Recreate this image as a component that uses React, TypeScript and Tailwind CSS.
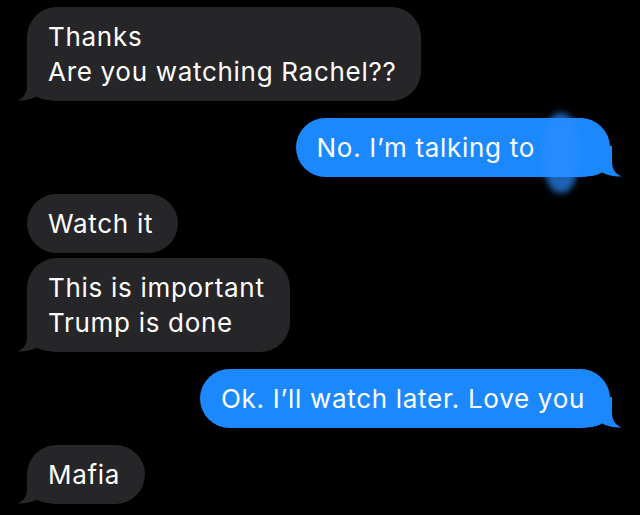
import React from 'react'

type Msg = {
  from: 'me' | 'them'
  lines: string[]
  tail: boolean
  gap: 'big' | 'small'
  redacted?: boolean
}

const messages: Msg[] = [
  { from: 'them', lines: ['Thanks', 'Are you watching Rachel??'], tail: true, gap: 'big' },
  { from: 'me', lines: ['No. I’m talking to'], tail: true, gap: 'big', redacted: true },
  { from: 'them', lines: ['Watch it'], tail: false, gap: 'big' },
  { from: 'them', lines: ['This is important', 'Trump is done'], tail: true, gap: 'small' },
  { from: 'me', lines: ['Ok. I’ll watch later. Love you'], tail: true, gap: 'big' },
  { from: 'them', lines: ['Mafia'], tail: true, gap: 'big' },
]

function Tail({ side, color }: { side: 'left' | 'right'; color: string }) {
  return (
    <svg
      viewBox="0 0 40 31"
      width="40"
      height="31"
      className={
        side === 'left'
          ? 'absolute -left-[10px] bottom-0'
          : 'absolute -right-[12px] bottom-0 -scale-x-100'
      }
    >
      <path
        d="M10 0 L10 15 C10 23 7 27.5 0.5 30.5 C7 31 14 29.5 20 26.5 C25 29.5 31 30.5 40 30.5 L40 0 Z"
        fill={color}
      />
    </svg>
  )
}

function Bubble({ msg }: { msg: Msg }) {
  const mine = msg.from === 'me'
  const color = mine ? '#1b89fd' : '#262628'
  return (
    <div
      className={`flex ${mine ? 'justify-end' : 'justify-start'} ${
        msg.gap === 'big' ? 'mt-[17px]' : 'mt-[5px]'
      } first:mt-0`}
    >
      <div
        className={`relative rounded-[30px] pl-[21px] pr-[25px] py-[12px] text-[26px] leading-[35px] tracking-[0.7px] text-white ${
          mine ? 'bg-[#1b89fd]' : 'bg-[#262628]'
        }`}
      >
        {msg.tail && <Tail side={mine ? 'right' : 'left'} color={color} />}
        {msg.redacted && (
          <div className="absolute right-[31px] -top-[5px] h-[80px] w-[36px] rounded-[45%] bg-[#2a8cff] opacity-70 blur-[3px]" />
        )}
        <div className="relative flex items-center">
          <div>
            {msg.lines.map((l) => (
              <div key={l} className="whitespace-nowrap">
                {l}
              </div>
            ))}
          </div>
          {msg.redacted && <div className="w-[50px]" />}
        </div>
      </div>
    </div>
  )
}

export default function App() {
  return (
    <div
      className="h-[515px] w-[640px] overflow-hidden bg-black pl-[27px] pr-[30px] pt-[7px]"
      style={{ fontFamily: 'Inter, "Noto Sans", sans-serif' }}
    >
      <div className="flex flex-col">
        {messages.map((m, i) => (
          <Bubble key={i} msg={m} />
        ))}
      </div>
    </div>
  )
}
